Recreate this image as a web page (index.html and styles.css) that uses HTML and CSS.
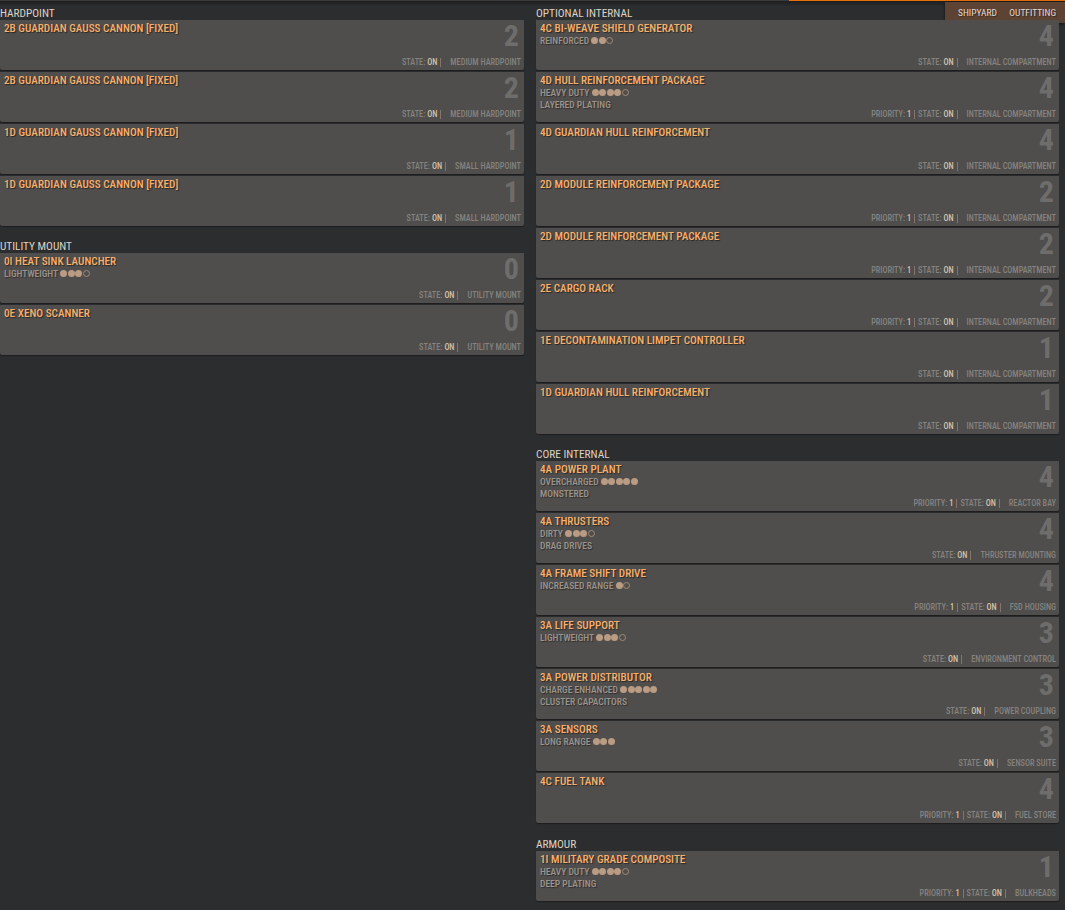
FILE: index.html
```html
<!DOCTYPE html>
<html lang="en">
<head>
<meta charset="utf-8">
<title>Outfitting</title>
<link rel="stylesheet" href="styles.css">
</head>
<body>
<header class="topbar">
  <div class="accent"></div>
  <nav class="tabs"><span>SHIPYARD</span><span>OUTFITTING</span></nav>
</header>
<main class="columns">
  <div class="column">
    <section class="group">
      <h2>HARDPOINT</h2>
      <article class="card"><h3>2B GUARDIAN GAUSS CANNON [FIXED]</h3><b class="size">2</b><footer><span class="stat">STATE: <em>ON</em></span><span class="slot">MEDIUM HARDPOINT</span></footer></article>
      <article class="card"><h3>2B GUARDIAN GAUSS CANNON [FIXED]</h3><b class="size">2</b><footer><span class="stat">STATE: <em>ON</em></span><span class="slot">MEDIUM HARDPOINT</span></footer></article>
      <article class="card"><h3>1D GUARDIAN GAUSS CANNON [FIXED]</h3><b class="size">1</b><footer><span class="stat">STATE: <em>ON</em></span><span class="slot">SMALL HARDPOINT</span></footer></article>
      <article class="card"><h3>1D GUARDIAN GAUSS CANNON [FIXED]</h3><b class="size">1</b><footer><span class="stat">STATE: <em>ON</em></span><span class="slot">SMALL HARDPOINT</span></footer></article>
    </section>
    <section class="group">
      <h2>UTILITY MOUNT</h2>
      <article class="card"><h3>0I HEAT SINK LAUNCHER</h3><p>LIGHTWEIGHT <i class="dot"></i><i class="dot"></i><i class="dot"></i><i class="dot off"></i></p><b class="size">0</b><footer><span class="stat">STATE: <em>ON</em></span><span class="slot">UTILITY MOUNT</span></footer></article>
      <article class="card"><h3>0E XENO SCANNER</h3><b class="size">0</b><footer><span class="stat">STATE: <em>ON</em></span><span class="slot">UTILITY MOUNT</span></footer></article>
    </section>
  </div>
  <div class="column">
    <section class="group">
      <h2>OPTIONAL INTERNAL</h2>
      <article class="card"><h3>4C BI-WEAVE SHIELD GENERATOR</h3><p>REINFORCED <i class="dot"></i><i class="dot"></i><i class="dot off"></i></p><b class="size">4</b><footer><span class="stat">STATE: <em>ON</em></span><span class="slot">INTERNAL COMPARTMENT</span></footer></article>
      <article class="card"><h3>4D HULL REINFORCEMENT PACKAGE</h3><p>HEAVY DUTY <i class="dot"></i><i class="dot"></i><i class="dot"></i><i class="dot"></i><i class="dot off"></i></p><p>LAYERED PLATING</p><b class="size">4</b><footer><span class="stat">PRIORITY: <em>1</em></span><span class="stat">STATE: <em>ON</em></span><span class="slot">INTERNAL COMPARTMENT</span></footer></article>
      <article class="card"><h3>4D GUARDIAN HULL REINFORCEMENT</h3><b class="size">4</b><footer><span class="stat">STATE: <em>ON</em></span><span class="slot">INTERNAL COMPARTMENT</span></footer></article>
      <article class="card"><h3>2D MODULE REINFORCEMENT PACKAGE</h3><b class="size">2</b><footer><span class="stat">PRIORITY: <em>1</em></span><span class="stat">STATE: <em>ON</em></span><span class="slot">INTERNAL COMPARTMENT</span></footer></article>
      <article class="card"><h3>2D MODULE REINFORCEMENT PACKAGE</h3><b class="size">2</b><footer><span class="stat">PRIORITY: <em>1</em></span><span class="stat">STATE: <em>ON</em></span><span class="slot">INTERNAL COMPARTMENT</span></footer></article>
      <article class="card"><h3>2E CARGO RACK</h3><b class="size">2</b><footer><span class="stat">PRIORITY: <em>1</em></span><span class="stat">STATE: <em>ON</em></span><span class="slot">INTERNAL COMPARTMENT</span></footer></article>
      <article class="card"><h3>1E DECONTAMINATION LIMPET CONTROLLER</h3><b class="size">1</b><footer><span class="stat">STATE: <em>ON</em></span><span class="slot">INTERNAL COMPARTMENT</span></footer></article>
      <article class="card"><h3>1D GUARDIAN HULL REINFORCEMENT</h3><b class="size">1</b><footer><span class="stat">STATE: <em>ON</em></span><span class="slot">INTERNAL COMPARTMENT</span></footer></article>
    </section>
    <section class="group">
      <h2>CORE INTERNAL</h2>
      <article class="card"><h3>4A POWER PLANT</h3><p>OVERCHARGED <i class="dot"></i><i class="dot"></i><i class="dot"></i><i class="dot"></i><i class="dot"></i></p><p>MONSTERED</p><b class="size">4</b><footer><span class="stat">PRIORITY: <em>1</em></span><span class="stat">STATE: <em>ON</em></span><span class="slot">REACTOR BAY</span></footer></article>
      <article class="card"><h3>4A THRUSTERS</h3><p>DIRTY <i class="dot"></i><i class="dot"></i><i class="dot"></i><i class="dot off"></i></p><p>DRAG DRIVES</p><b class="size">4</b><footer><span class="stat">STATE: <em>ON</em></span><span class="slot">THRUSTER MOUNTING</span></footer></article>
      <article class="card"><h3>4A FRAME SHIFT DRIVE</h3><p>INCREASED RANGE <i class="dot"></i><i class="dot off"></i></p><b class="size">4</b><footer><span class="stat">PRIORITY: <em>1</em></span><span class="stat">STATE: <em>ON</em></span><span class="slot">FSD HOUSING</span></footer></article>
      <article class="card"><h3>3A LIFE SUPPORT</h3><p>LIGHTWEIGHT <i class="dot"></i><i class="dot"></i><i class="dot"></i><i class="dot off"></i></p><b class="size">3</b><footer><span class="stat">STATE: <em>ON</em></span><span class="slot">ENVIRONMENT CONTROL</span></footer></article>
      <article class="card"><h3>3A POWER DISTRIBUTOR</h3><p>CHARGE ENHANCED <i class="dot"></i><i class="dot"></i><i class="dot"></i><i class="dot"></i><i class="dot"></i></p><p>CLUSTER CAPACITORS</p><b class="size">3</b><footer><span class="stat">STATE: <em>ON</em></span><span class="slot">POWER COUPLING</span></footer></article>
      <article class="card"><h3>3A SENSORS</h3><p>LONG RANGE <i class="dot"></i><i class="dot"></i><i class="dot"></i></p><b class="size">3</b><footer><span class="stat">STATE: <em>ON</em></span><span class="slot">SENSOR SUITE</span></footer></article>
      <article class="card"><h3>4C FUEL TANK</h3><b class="size">4</b><footer><span class="stat">PRIORITY: <em>1</em></span><span class="stat">STATE: <em>ON</em></span><span class="slot">FUEL STORE</span></footer></article>
    </section>
    <section class="group armour">
      <h2>ARMOUR</h2>
      <article class="card"><h3>1I MILITARY GRADE COMPOSITE</h3><p>HEAVY DUTY <i class="dot"></i><i class="dot"></i><i class="dot"></i><i class="dot"></i><i class="dot off"></i></p><p>DEEP PLATING</p><b class="size">1</b><footer><span class="stat">PRIORITY: <em>1</em></span><span class="stat">STATE: <em>ON</em></span><span class="slot">BULKHEADS</span></footer></article>
    </section>
  </div>
</main>
</body>
</html>
```
FILE: styles.css
```css
* { box-sizing: border-box; }
html, body { margin: 0; padding: 0; }
body {
  height: 910px;
  overflow: hidden;
  background: #2c2d2f;
  font-family: Roboto, "Liberation Sans", sans-serif;
  font-stretch: 75%;
  position: relative;
}
.topbar {
  height: 6px;
  background: linear-gradient(#1e1e1f, #2a2b2d);
  border-top: 1px solid #3a3a3a;
}
.accent {
  position: absolute;
  top: 0;
  left: 789px;
  right: 0;
  height: 1px;
  background: #e8700a;
}
.tabs {
  position: absolute;
  top: 2px;
  right: 0;
  width: 120px;
  height: 21px;
  padding: 0 9px 0 13px;
  display: flex;
  align-items: center;
  justify-content: space-between;
  background: #5d4333;
  box-shadow: 0 1px 3px rgba(0, 0, 0, .6);
  color: #e2dcd6;
  font-size: 9.5px;
  text-shadow: 1px 1px 1px rgba(0, 0, 0, .4);
}
.columns {
  display: grid;
  grid-template-columns: 524px 523px;
  column-gap: 12px;
}
.group { margin-bottom: 13px; }
.armour { margin-top: 14px; }
h2 {
  margin: 0;
  height: 14px;
  font-size: 11.3px;
  line-height: 16px;
  font-weight: normal;
  color: #ddd2c2;
}
.card {
  position: relative;
  height: 50px;
  margin-bottom: 2px;
  padding: 2px 4px 1px;
  background: #4f4e4c;
  border-radius: 0 0 2px 2px;
  box-shadow: 0 1px 1px rgba(0, 0, 0, .35);
}
.group .card:last-child { margin-bottom: 0; }
h3 {
  margin: 0;
  height: 14px;
  font-size: 11.2px;
  line-height: 14px;
  font-weight: 500;
  color: #f8b06c;
  text-shadow: 1px 1px 1px rgba(0, 0, 0, .5);
}
p {
  margin: 0 0 3px;
  display: flex;
  align-items: center;
  height: 9px;
  font-size: 9.5px;
  line-height: 9px;
  font-weight: 500;
  color: #9c948c;
  white-space: pre;
  text-shadow: 1px 1px 1px rgba(0, 0, 0, .4);
}
.dot {
  width: 7px;
  height: 7px;
  margin-right: .5px;
  border-radius: 50%;
  background: #b99c83;
}
.dot.off {
  background: none;
  border: 1px solid #a08a78;
}
.size {
  position: absolute;
  top: 1px;
  right: 5px;
  font-size: 30px;
  line-height: 30px;
  font-weight: bold;
  color: #6f6d6b;
}
footer {
  position: absolute;
  right: 3px;
  bottom: 3px;
  display: flex;
  align-items: center;
  height: 9px;
  font-size: 8.3px;
  line-height: 9px;
  font-weight: 500;
  color: #85827f;
}
em { font-style: normal; color: #d4c2a8; }
.stat {
  padding-right: 3px;
  margin-right: 3px;
  border-right: 1px solid #85746a;
}
.stat + .slot { margin-left: 6px; }
```
